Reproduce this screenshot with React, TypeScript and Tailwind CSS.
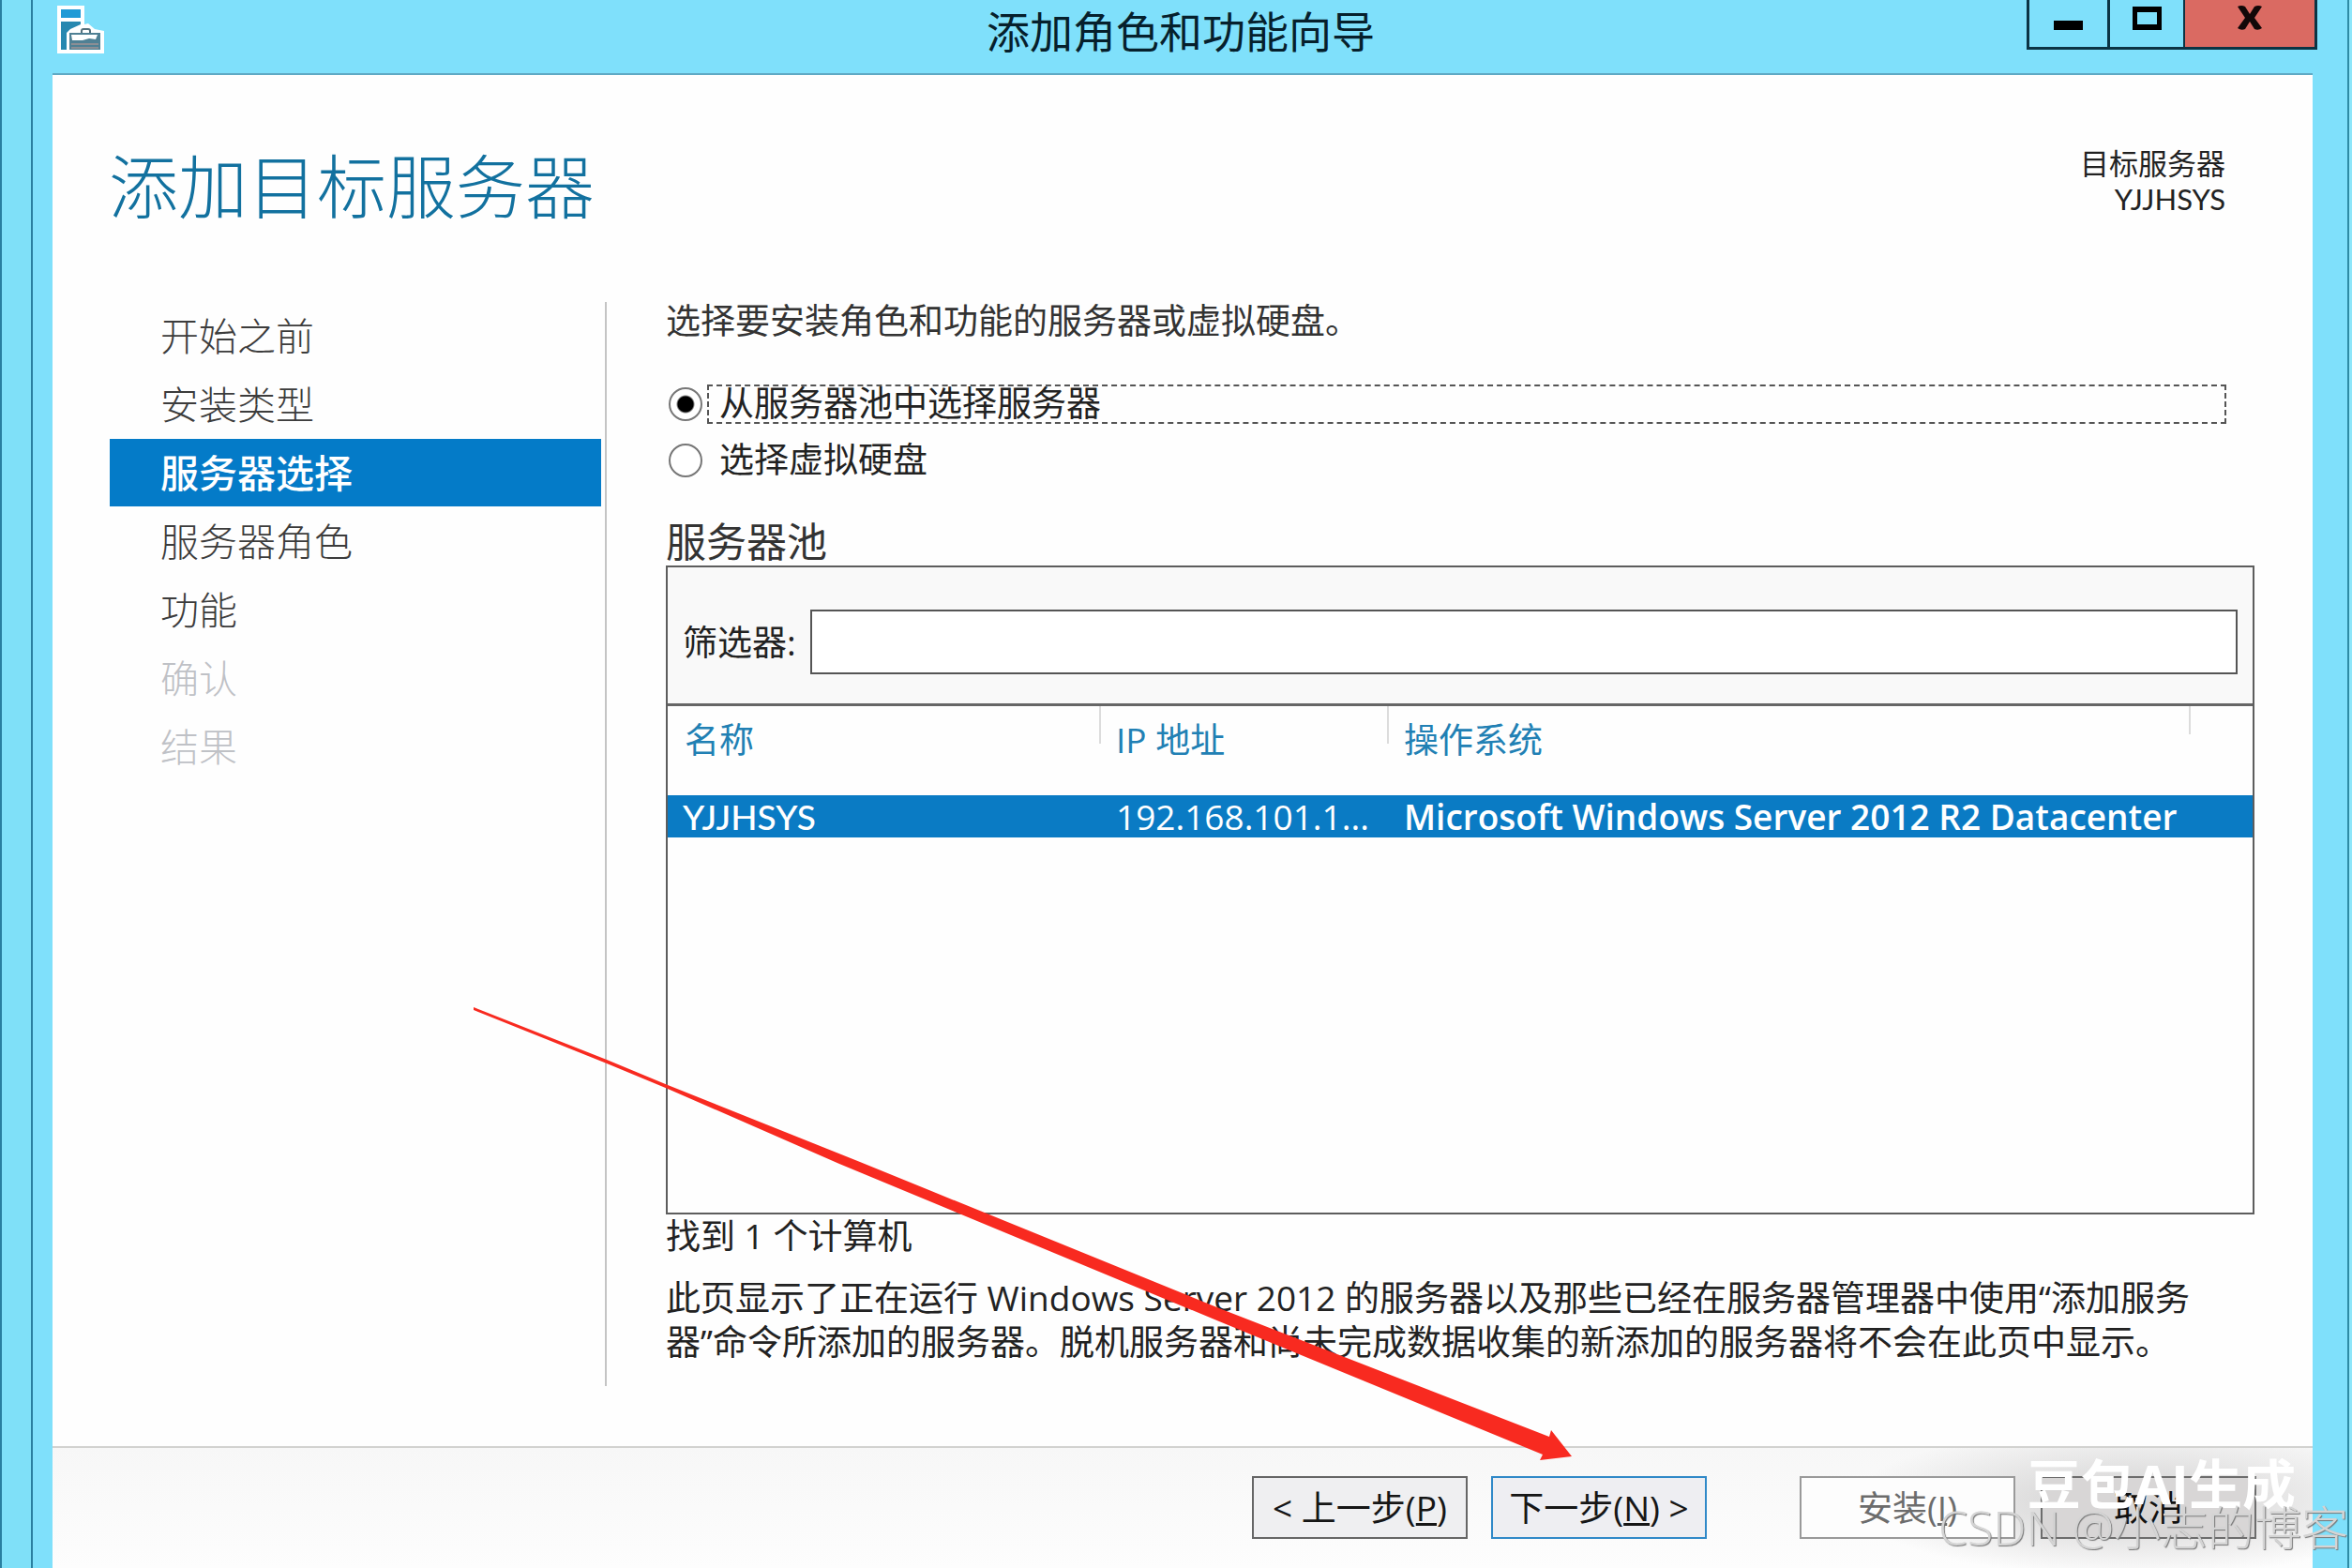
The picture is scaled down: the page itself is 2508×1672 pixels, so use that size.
import React, { useState } from 'react';
import { clsx } from 'clsx';

const STEPS = [
  { label: '开始之前', state: 'done' },
  { label: '安装类型', state: 'done' },
  { label: '服务器选择', state: 'active' },
  { label: '服务器角色', state: 'done' },
  { label: '功能', state: 'done' },
  { label: '确认', state: 'disabled' },
  { label: '结果', state: 'disabled' },
];

const SERVERS = [
  { name: 'YJJHSYS', ip: '192.168.101.1...', os: 'Microsoft Windows Server 2012 R2 Datacenter' },
];

const WizardIcon = () => (
  <svg viewBox="0 0 50 52" className="w-[50px] h-[52px]" aria-hidden="true">
    <path d="M0 0H29V20L33 19L40 25L50 27V51H0Z" fill="#fff" />
    <path d="M4 4H25V13H4Z" fill="#1f9ad6" />
    <path d="M4 17H25V20L14 25L10 29V47H4Z" fill="#2788b0" />
    <path d="M13 29H46V47H13Z" fill="#4f8094" />
    <path d="M15 31H43L41 36L34 35L27 37L16 37Z" fill="#fff" />
    <path d="M26 29V27Q26 25 28 25H33Q35 25 35 27V29" fill="none" stroke="#54707c" strokeWidth="2" />
    <path d="M15 41H44M15 45H44" stroke="#8b8e94" strokeWidth="2" />
  </svg>
);

const TitleBar = () => (
  <header className="relative flex h-[80px] items-start justify-between border-b-2 border-[#5fa9c4] pl-[5px]">
    <div className="pt-[6px]">
      <WizardIcon />
    </div>
    <h1 className="absolute inset-x-0 top-0 pr-[4px] text-center text-[46px] leading-[66px] text-[#06202c]">
      添加角色和功能向导
    </h1>
    <div className="relative -mr-[5px] flex h-[53px] border-x-[3px] border-b-[3px] border-[#0b3444]">
      <button aria-label="最小化" className="flex w-[86px] justify-center border-r-[3px] border-[#0b3444] pt-[22px]">
        <span className="h-[10px] w-[31px] bg-black" />
      </button>
      <button aria-label="最大化" className="flex w-[80px] justify-center border-r-2 border-[#0b3444] pt-[7px]">
        <span className="h-[25px] w-[31px] border-x-[5px] border-y-[6px] border-black" />
      </button>
      <button aria-label="关闭" className="flex w-[138px] justify-center bg-[#da6a62] pt-[6px]">
        <svg viewBox="0 0 26 26" className="h-[26px] w-[26px]">
          <path d="M0 1Q4 -1 8 1L13 9L18 1Q22 -1 26 1L18 13L26 24Q22 27 18 25L13 17L8 25Q4 27 0 24L8 13Z" fill="#120808" />
        </svg>
      </button>
    </div>
  </header>
);

const StepList = () => (
  <nav className="w-[530px] shrink-0 self-stretch border-r-2 border-[#c4c4c4] pr-[4px]">
    <ul className="flex flex-col gap-px">
      {STEPS.map(({ label, state }) => (
        <li key={label}>
          <button
            disabled={state === 'disabled'}
            className={clsx(
              'block h-[72px] w-full pl-[54px] text-left text-[41px] leading-[72px]',
              state === 'active' && 'bg-[#047bc8] font-medium text-white',
              state === 'done' && 'font-light text-[#3c3c3c]',
              state === 'disabled' && 'font-light text-[#bfc1c6]'
            )}
          >
            {label}
          </button>
        </li>
      ))}
    </ul>
  </nav>
);

const SourceOption = ({ id, label, checked, onSelect }: { id: string; label: string; checked: boolean; onSelect: () => void }) => (
  <div className="mr-[30px] flex h-[42px] items-center">
    <input
      type="radio"
      id={id}
      name="source"
      checked={checked}
      onChange={onSelect}
      className="ml-[3px] h-[36px] w-[36px] shrink-0 appearance-none rounded-full border-2 border-[#777] bg-white checked:bg-[radial-gradient(circle,#000_8px,#fff_10px)]"
    />
    <label
      htmlFor={id}
      className={clsx(
        'ml-[5px] h-[42px] flex-1 border-2 pl-[11px] text-[37px] leading-[36px] text-[#222]',
        checked ? 'border-dashed border-[#555]' : 'border-transparent'
      )}
    >
      {label}
    </label>
  </div>
);

const ServerPool = () => {
  const [filter, setFilter] = useState('');
  const rows = SERVERS.filter((s) => s.name.toLowerCase().includes(filter.toLowerCase()));

  return (
    <section className="flex flex-1 flex-col border-2 border-[#5d5d5d]">
      <div className="flex h-[148px] items-center border-b-[3px] border-[#666] bg-[#f9f9f9] pt-[14px] pr-[16px] pl-[16px]">
        <label htmlFor="filter" className="w-[136px] text-[37px] leading-[48px] text-[#222]">
          筛选器:
        </label>
        <input
          id="filter"
          type="text"
          value={filter}
          onChange={(e) => setFilter(e.target.value)}
          className="h-[69px] flex-1 border-2 border-[#555] bg-white px-3 text-[37px] focus:outline-none"
        />
      </div>
      <table className="w-full table-fixed text-left text-[37px]">
        <thead>
          <tr className="h-[95px] align-top text-[#2180b4]">
            <th className="w-[460px] pt-[12px] pl-[18px] leading-[48px] font-normal">名称</th>
            <th className="relative w-[307px] pt-[12px] pl-[18px] leading-[48px] font-normal before:absolute before:top-0 before:left-0 before:h-[40px] before:w-[2px] before:bg-[#dcdcdc]">
              IP 地址
            </th>
            <th className="relative pt-[12px] pl-[18px] leading-[48px] font-normal before:absolute before:top-0 before:left-0 before:h-[40px] before:w-[2px] before:bg-[#dcdcdc]">
              操作系统
            </th>
            <td className="relative w-[68px] before:absolute before:top-0 before:left-0 before:h-[30px] before:w-[2px] before:bg-[#dcdcdc]" />
          </tr>
        </thead>
        <tbody>
          {rows.map((s) => (
            <tr key={s.name} className="h-[45px] bg-[#0a7bc4] leading-[44px] font-medium whitespace-nowrap text-white">
              <td className="pl-[16px] font-[Lato]">{s.name}</td>
              <td className="pl-[18px]">{s.ip}</td>
              <td colSpan={2} className="pl-[18px] font-semibold">{s.os}</td>
            </tr>
          ))}
        </tbody>
      </table>
    </section>
  );
};

const Footer = () => {
  const base = 'h-[67px] w-[230px] border-2 text-[37px] leading-[60px] whitespace-nowrap';
  return (
    <footer className="flex h-[130px] items-start justify-end border-t-2 border-[#d2d2d0] bg-[radial-gradient(ellipse_300px_80px_at_92%_45%,#d0cfcf,transparent),linear-gradient(#f7f7f7,#fdfdfd)] pt-[30px] pr-[60px]">
      <button className={clsx(base, 'border-[#666] bg-[#efeff1] text-[#161616]')}>
        &lt; 上一步(<u>P</u>)
      </button>
      <button className={clsx(base, 'ml-[25px] border-[#3089c8] bg-[#eeeef2] text-[#161616]')}>
        下一步(<u>N</u>) &gt;
      </button>
      <button className={clsx(base, 'ml-[99px] border-[#9a9a9a] bg-[#fdfdfd] text-[#6c6c6c]')}>
        安装(<u>I</u>)
      </button>
      <button className={clsx(base, 'ml-[27px] border-[#6d6d6d] bg-[#d8d6d6] text-[#111]')}>取消</button>
    </footer>
  );
};

export default function App() {
  const [source, setSource] = useState('pool');

  return (
    <div className="relative flex min-h-screen overflow-hidden bg-[#7fe0fb] font-['Open_Sans','Noto_Sans_CJK_SC',sans-serif]">
      <div className="w-[35px] shrink-0 border-x-2 border-[#2a7fa0] bg-[#7fe0f8]" />
      <div className="flex min-w-0 flex-1 flex-col pr-[42px] pl-[21px]">
        <TitleBar />
        <main className="flex flex-1 flex-col bg-[#fefefe]">
          <div className="flex h-[242px] items-start justify-between pt-[71px] pr-[93px] pl-[60px]">
            <h2 className="text-[74px] leading-[96px] font-light text-[#12719f]">添加目标服务器</h2>
            <div className="pt-[4px] text-right text-[31px] leading-[38px] text-[#222]">
              <p>目标服务器</p>
              <p className="font-[Lato]">YJJHSYS</p>
            </div>
          </div>
          <div className="flex flex-1 pr-[62px] pb-[64px] pl-[61px]">
            <StepList />
            <div className="flex min-w-0 flex-1 flex-col pb-[24px] pl-[63px]">
              <p className="text-[37px] leading-[40px] text-[#333]">选择要安装角色和功能的服务器或虚拟硬盘。</p>
              <div className="mt-[48px] flex flex-col gap-[18px]">
                <SourceOption id="pool" label="从服务器池中选择服务器" checked={source === 'pool'} onSelect={() => setSource('pool')} />
                <SourceOption id="vhd" label="选择虚拟硬盘" checked={source === 'vhd'} onSelect={() => setSource('vhd')} />
              </div>
              <h3 className="mt-[41px] text-[43px] leading-[50px] text-[#333]">服务器池</h3>
              <ServerPool />
              <p className="text-[37px] leading-[46px] text-[#222]">找到 1 个计算机</p>
              <p className="mt-[19px] text-[37px] leading-[47px] text-[#222]">
                此页显示了正在运行 Windows Server 2012 的服务器以及那些已经在服务器管理器中使用“添加服务
                <br />
                器”命令所添加的服务器。脱机服务器和尚未完成数据收集的新添加的服务器将不会在此页中显示。
              </p>
            </div>
          </div>
          <Footer />
        </main>
      </div>
      <div className="absolute inset-y-0 right-0 w-[5px] border-l-2 border-[#2f8ca5] bg-[#8de6fa]" />

      {/* pointer to the next button */}
      <svg viewBox="0 0 1171 484" className="pointer-events-none absolute top-[1074px] left-[505px] h-[484px] w-[1171px]">
        <path d="M0 0L142 56L207 83L412 165L795 321L1147 458L1149 451L1171 479L1137 483L1140 477L795 335L390 167L207 87L142 60L0 3Z" fill="#f82a20" />
      </svg>

      {/* watermarks */}
      <span className="pointer-events-none absolute right-[60px] bottom-[57px] text-[57px] leading-[66px] font-bold text-white">
        豆包AI生成
      </span>
      <span className="pointer-events-none absolute right-[4px] bottom-[10px] text-[50px] leading-[66px] font-light text-[#d4d4d4] [text-shadow:1px_1px_1px_#777]">
        CSDN @小志的博客
      </span>
    </div>
  );
}
